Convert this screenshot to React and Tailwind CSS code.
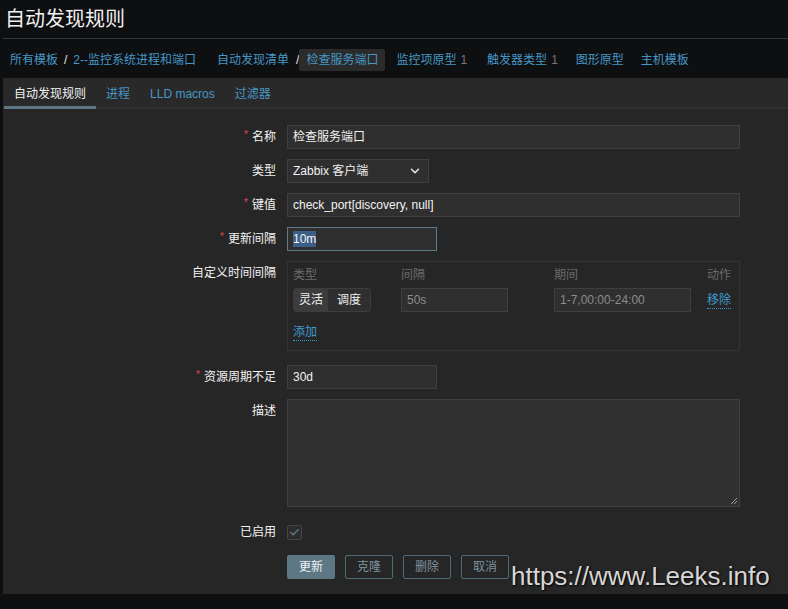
import { ChevronDown, Check } from "lucide-react";

const font = "font-['Liberation_Sans','Noto_Sans_CJK_SC',sans-serif]";

function Req() {
    return <span className="text-[#e0494c] text-[10px] mr-[4px] leading-none -mt-[4px]">*</span>;
}

function Row({ label, required, className = "", children }) {
    return (
        <div className={"flex items-start " + className}>
            <div className="w-[284px] h-[24px] shrink-0 pr-[11px] flex items-center justify-end text-[12px] text-[#f2f2f2]">
                {required && <Req />}
                <span>{label}</span>
            </div>
            {children}
        </div>
    );
}

const boxCls =
    "h-[24px] bg-[#2f2f2f] border border-[#3f3f3f] px-[5px] text-[12px] leading-[22px] flex items-center";
const inputCls = boxCls + " text-[#f2f2f2]";
const dimCls = boxCls + " text-[#8c8c8c]";

export default function App() {
    return (
        <div className={"relative min-h-[609px] bg-[#0e0f11] " + font}>
            {/* header */}
            <div className="ml-[3px] h-[39px] border-b border-[#353535] flex items-center pl-[2px] pb-[1px]">
                <h1 className="text-[20px] text-[#f0f0f0] leading-none">自动发现规则</h1>
            </div>

            {/* breadcrumbs */}
            <div className="h-[39px] flex items-center pl-[10px] pt-[3px] text-[12px] text-[#4797c6]">
                <span>所有模板</span>
                <span className="text-[#e6e6e6] mx-[6px]">/</span>
                <span>2--监控系统进程和端口</span>
                <span className="ml-[21px]">自动发现清单</span>
                <span className="text-[#e6e6e6] ml-[7px]">/</span>
                <span className="bg-[#2b2b2b] px-[7px] h-[22px] flex items-center rounded-[2px]">检查服务端口</span>
                <span className="ml-[11px]">监控项原型</span>
                <span className="text-[#777] ml-[4px]">1</span>
                <span className="ml-[20px]">触发器类型</span>
                <span className="text-[#777] ml-[4px]">1</span>
                <span className="ml-[18px]">图形原型</span>
                <span className="ml-[17px]">主机模板</span>
            </div>

            {/* panel */}
            <div className="ml-[3px] bg-[#262626] h-[516px]">
                <div className="h-[31px] flex border-b-[2px] border-[#2f2f2f] bg-[#292929] text-[12px]">
                    <div className="px-[10px] ml-[1px] flex items-center text-[#f2f2f2] border-b-[3px] border-[#5d7884] -mb-[2px] pt-[3px]">
                        自动发现规则
                    </div>
                    <div className="px-[10px] flex items-center text-[#4797c6] pt-[2px]">进程</div>
                    <div className="px-[10px] flex items-center text-[#4797c6] pt-[2px]">LLD macros</div>
                    <div className="px-[10px] flex items-center text-[#4797c6] pt-[2px]">过滤器</div>
                </div>

                <div className="pt-[16px] flex flex-col">
                    <Row label="名称" required>
                        <div className={inputCls + " w-[453px]"}>检查服务端口</div>
                    </Row>
                    <Row label="类型" className="mt-[10px]">
                        <div className={inputCls + " w-[142px] justify-between pr-[6px]"}>
                            <span>Zabbix 客户端</span>
                            <ChevronDown size={14} strokeWidth={2.6} className="text-[#e6e6e6]" />
                        </div>
                    </Row>
                    <Row label="键值" required className="mt-[10px]">
                        <div className={inputCls + " w-[453px]"}>check_port[discovery, null]</div>
                    </Row>
                    <Row label="更新间隔" required className="mt-[10px]">
                        <div className="h-[24px] w-[150px] bg-[#2f2f2f] border border-[#5b7a8c] px-[5px] text-[12px] flex items-center">
                            <span className="bg-[#3b5f86] text-[#f2f2f2] leading-[16px]">10m</span>
                        </div>
                    </Row>
                    <Row label="自定义时间间隔" className="mt-[10px]">
                        <div className="w-[453px] h-[90px] border border-[#333] pl-[5px] pt-[6px] text-[12px]">
                            <div className="flex text-[#6b6b6b] leading-[14px]">
                                <div className="w-[108px]">类型</div>
                                <div className="w-[153px]">间隔</div>
                                <div className="w-[153px]">期间</div>
                                <div>动作</div>
                            </div>
                            <div className="flex items-center mt-[6px] h-[24px]">
                                <div className="w-[108px]">
                                    <div className="flex w-[78px] h-[24px] border border-[#3d3d3d] rounded-[3px] overflow-hidden text-[#f0f0f0]">
                                        <div className="w-[34px] bg-[#3c3c3c] flex items-center justify-center">灵活</div>
                                        <div className="flex-1 bg-[#2f2f2f] flex items-center justify-center">调度</div>
                                    </div>
                                </div>
                                <div className="w-[153px]">
                                    <div className={dimCls + " w-[107px]"}>50s</div>
                                </div>
                                <div className="w-[153px]">
                                    <div className={dimCls + " w-[137px]"}>1-7,00:00-24:00</div>
                                </div>
                                <span className="text-[#3f9bcf] border-b border-dotted border-[#3f9bcf] leading-[15px] mt-[2px]">移除</span>
                            </div>
                            <div className="mt-[11px]">
                                <span className="text-[#3f9bcf] border-b border-dotted border-[#3f9bcf] leading-[15px] inline-block">添加</span>
                            </div>
                        </div>
                    </Row>
                    <Row label="资源周期不足" required className="mt-[14px]">
                        <div className={inputCls + " w-[150px]"}>30d</div>
                    </Row>
                    <Row label="描述" className="mt-[10px]">
                        <div className="relative w-[453px] h-[108px] bg-[#303030] border border-[#3f3f3f]">
                            <svg className="absolute right-[1px] bottom-[1px]" width="8" height="8" viewBox="0 0 8 8">
                                <path d="M7 1 L1 7 M7 4 L4 7" stroke="#9a9a9a" strokeWidth="1" />
                            </svg>
                        </div>
                    </Row>
                    <div className="flex items-center h-[16px] mt-[17px]">
                        <div className="w-[284px] shrink-0 pr-[11px] text-right text-[12px] text-[#f2f2f2]">已启用</div>
                        <div className="w-[15px] h-[15px] border border-[#444] bg-[#2c2c2c] rounded-[2px] flex items-center justify-center">
                            <Check size={11} strokeWidth={3} className="text-[#5d7a89]" />
                        </div>
                    </div>
                    <div className="flex mt-[15px] pl-[284px] gap-[10px] text-[12px]">
                        <div className="h-[24px] w-[48px] bg-[#5d7785] rounded-[2px] text-[#eef2f4] flex items-center justify-center">更新</div>
                        <div className="h-[24px] w-[48px] border border-[#4f6b78] rounded-[2px] text-[#7b929e] flex items-center justify-center">克隆</div>
                        <div className="h-[24px] w-[48px] border border-[#4f6b78] rounded-[2px] text-[#7b929e] flex items-center justify-center">删除</div>
                        <div className="h-[24px] w-[48px] border border-[#4f6b78] rounded-[2px] text-[#7b929e] flex items-center justify-center">取消</div>
                    </div>
                </div>
            </div>

            {/* watermark */}
            <div className="absolute left-[511px] top-[560px] text-[26px] leading-[32px] text-[#d6d6d6] font-['Liberation_Sans',sans-serif] [text-shadow:1px_1px_2px_#000]">
                https://www.Leeks.info
            </div>
        </div>
    );
}
